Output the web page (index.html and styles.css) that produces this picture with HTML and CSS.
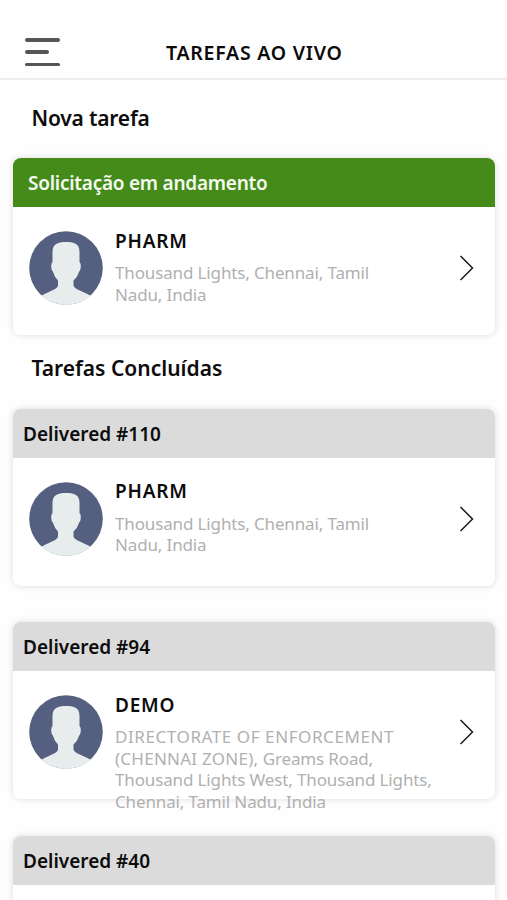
FILE: index.html
```html
<!DOCTYPE html>
<html lang="pt">
<head>
  <meta charset="UTF-8" />
  <meta name="viewport" content="width=device-width, initial-scale=1.0" />
  <title>Tarefas ao vivo</title>
  <link rel="stylesheet" href="styles.css">
</head>
<body>
  <svg class="sprite" aria-hidden="true">
    <symbol id="avatar" viewBox="0 0 74 74">
      <circle class="avatar-bg" cx="37" cy="37" r="36.8" />
      <path class="avatar-person" d="M23.500 31 V21 C23.500 13.500 28 11 37 11 C46.500 11 50.500 13.500 50.500 21 V31 Q52 32 51.800 36 Q51.500 39.500 50.200 40.500 Q48.500 46 44.500 49.500 V54.500 C45.500 58.500 55 60.500 61.500 64.700 A37 37 0 0 1 12.500 64.700 C19 60.500 28.500 58.500 29 54.500 V49.500 Q25.500 46 23.800 40.500 Q22.500 39.500 22.200 36 Q22 32 23.500 31 Z" />
    </symbol>
    <symbol id="chevron" viewBox="0 0 16 26">
      <path d="M1.500 1 L13.500 13 L1.500 25" fill="none" stroke="#1a1a1a" stroke-width="1.500" />
    </symbol>
  </svg>

  <header class="topbar">
    <button class="menu-btn" aria-label="Menu">
      <span class="menu-line"></span>
      <span class="menu-line short"></span>
      <span class="menu-line"></span>
    </button>
    <h1 class="title">TAREFAS AO VIVO</h1>
  </header>

  <main class="tasks">
    <h2 class="section-title">Nova tarefa</h2>
    <div class="card">
      <div class="card-head active">Solicitação em andamento</div>
      <div class="card-body">
        <svg class="avatar"><use href="#avatar" /></svg>
        <div class="info">
          <div class="name">PHARM</div>
          <div class="address">Thousand Lights, Chennai, Tamil<br>Nadu, India</div>
        </div>
        <svg class="chevron"><use href="#chevron" /></svg>
      </div>
    </div>

    <h2 class="section-title done">Tarefas Concluídas</h2>
    <div class="done-list">
      <div class="card">
        <div class="card-head">Delivered #110</div>
        <div class="card-body">
          <svg class="avatar"><use href="#avatar" /></svg>
          <div class="info">
            <div class="name">PHARM</div>
            <div class="address">Thousand Lights, Chennai, Tamil<br>Nadu, India</div>
          </div>
          <svg class="chevron"><use href="#chevron" /></svg>
        </div>
      </div>
      <div class="card">
        <div class="card-head">Delivered #94</div>
        <div class="card-body">
          <svg class="avatar"><use href="#avatar" /></svg>
          <div class="info">
            <div class="name">DEMO</div>
            <div class="address"><span class="caps">DIRECTORATE OF ENFORCEMENT</span><br><span class="caps zone">(CHENNAI ZONE),</span> Greams Road,<br>Thousand Lights West, Thousand Lights,<br>Chennai, Tamil Nadu, India</div>
          </div>
          <svg class="chevron"><use href="#chevron" /></svg>
        </div>
      </div>
      <div class="card">
        <div class="card-head">Delivered #40</div>
      </div>
    </div>
  </main>
</body>
</html>
```
FILE: styles.css
```css
* {
  box-sizing: border-box;
}
body {
  margin: 0;
  height: 900px;
  overflow: hidden;
  font-family: "Noto Sans", sans-serif;
  background: #fefefe;
  color: #0c0c0c;
}
.sprite {
  display: none;
}
.avatar-bg {
  fill: #556080;
}
.avatar-person {
  fill: #e7eced;
}
.topbar {
  display: flex;
  align-items: flex-end;
  height: 80px;
  padding: 0 25px 12px;
  border-bottom: 2px solid #ededed;
}
.menu-btn {
  display: flex;
  flex-direction: column;
  justify-content: space-between;
  width: 35px;
  height: 28px;
  margin-right: 105px;
  padding: 0;
  border: 0;
  background: none;
}
.menu-line {
  width: 35px;
  height: 3.5px;
  border-radius: 2px;
  background: #555;
}
.menu-line.short {
  width: 24px;
}
.title {
  margin: 0;
  padding-left: 1px;
  font-size: 19.5px;
  font-weight: 600;
  line-height: 26px;
  letter-spacing: 0.75px;
  white-space: nowrap;
}
.tasks {
  height: 820px;
  padding: 23px 12px 0 13px;
  overflow: hidden;
}
.section-title {
  margin: 0 0 25.400px 18.500px;
  font-size: 21px;
  font-weight: 600;
  line-height: 30px;
  letter-spacing: -0.2px;
}
.section-title.done {
  margin-top: 17.800px;
  margin-bottom: 25.500px;
  letter-spacing: 0;
}
.card {
  height: 177px;
  border-radius: 8px;
  background: #fff;
  box-shadow: 0 0 7px rgba(0, 0, 0, 0.14);
}
.card-head {
  height: 49px;
  padding-left: 10px;
  border-radius: 8px 8px 0 0;
  background: #dbdbdb;
  font-size: 19px;
  font-weight: 600;
  line-height: 50px;
}
.card-head.active {
  padding-left: 15px;
  background: #458b1a;
  color: #f4faf0;
  letter-spacing: -0.25px;
}
.card-body {
  display: flex;
  height: 128px;
  padding: 24px 20px 0 16px;
}
.avatar {
  flex: none;
  width: 74px;
  height: 74px;
}
.info {
  flex: 1;
  margin-left: 12px;
  white-space: nowrap;
}
.name {
  margin: -1.800px 0 10.800px;
  font-size: 19px;
  font-weight: 600;
  line-height: 22px;
  letter-spacing: 0.8px;
}
.address {
  color: #b0b0b0;
  font-size: 17px;
  line-height: 21.5px;
  letter-spacing: -0.14px;
}
.caps {
  letter-spacing: 0.58px;
}
.caps.zone {
  letter-spacing: 0.25px;
}
.chevron {
  flex: none;
  width: 16px;
  height: 26px;
  margin-top: 24px;
}
.done-list {
  display: flex;
  flex-direction: column;
  gap: 36.700px;
}
```
